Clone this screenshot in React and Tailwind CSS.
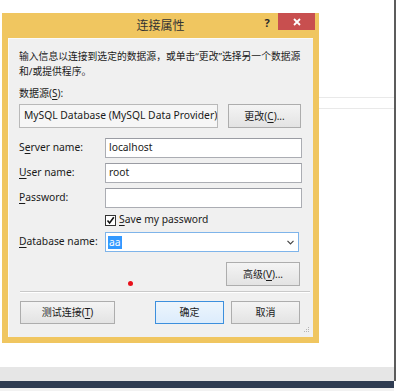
export default function App() {
  const btn =
    "h-full flex items-center justify-center border border-[#adadad] bg-gradient-to-b from-[#f4f4f4] to-[#e3e3e3] text-[10px] text-[#1a1a1a]";
  const box = "flex-1 h-full border border-[#abadb3] border-t-[#9a9ca3] bg-white flex items-center pl-[3px] text-[10.3px]";

  return (
    <div className="w-[398px] h-[391px] bg-white flex overflow-hidden font-['Noto_Sans','Noto_Sans_CJK_SC',sans-serif] text-[#1a1a1a]">
      <div className="w-[394px] flex flex-col">
        <div className="h-[367px] flex pt-[13px] pl-[2px]">
          {/* dialog */}
          <div className="w-[317px] h-[330px] bg-[#f0c660] flex flex-col shrink-0">
            <div className="h-[25px] flex shrink-0">
              <div className="w-[61px]" />
              <div className="flex-1 flex items-center justify-center text-[12px] text-[#333]">连接属性</div>
              <div className="w-[61px] flex items-start">
                <span className="w-[14px] mt-[4px] ml-[2px] text-center text-[11px] font-bold leading-[12px] text-[#2a2a2a]">?</span>
                <div className="ml-[4px] w-[37px] h-[17px] bg-[#c84f4f] flex items-center justify-center">
                  <svg width="8" height="8" viewBox="0 0 8 8">
                    <path d="M1 1 L7 7 M7 1 L1 7" stroke="#fff" strokeWidth="1.8" />
                  </svg>
                </div>
              </div>
            </div>

            {/* client area */}
            <div className="mx-[6px] mb-[6px] flex-1 bg-[#f0f0f0] border-t border-l border-[#fafafa] flex flex-col pt-[10px] pl-[10px] pr-[11px]">
              <p className="text-[9.8px] leading-[15px]">
                输入信息以连接到选定的数据源，或单击“更改”选择另一个数据源
                <br />
                和/或提供程序。
              </p>
              <div className="mt-[7px] text-[10px] leading-[14px]">
                数据源(<u className="underline-offset-2">S</u>):
              </div>
              <div className="mt-[4px] h-[24px] flex">
                <div className="w-[199px] h-full border border-[#b9b9b9] bg-[#f6f6f6] flex items-center pl-[4px] text-[10.3px] whitespace-nowrap overflow-hidden">
                  MySQL Database (MySQL Data Provider)
                </div>
                <div className={btn + " ml-[10px] w-[73px]"}>
                  更改(<u className="underline-offset-2">C</u>)...
                </div>
              </div>

              <div className="mt-[10px] h-[20px] flex items-center">
                <span className="w-[86px] text-[10.3px]">
                  S<u className="underline-offset-2">e</u>rver name:
                </span>
                <div className={box}>localhost</div>
              </div>
              <div className="mt-[5px] h-[20px] flex items-center">
                <span className="w-[86px] text-[10.3px]">
                  <u className="underline-offset-2">U</u>ser name:
                </span>
                <div className={box}>root</div>
              </div>
              <div className="mt-[5px] h-[20px] flex items-center">
                <span className="w-[86px] text-[10.3px]">
                  <u className="underline-offset-2">P</u>assword:
                </span>
                <div className={box} />
              </div>

              <div className="mt-[6px] h-[12px] flex items-center pl-[86px]">
                <div className="w-[11px] h-[11px] border border-[#333] bg-white flex items-center justify-center">
                  <svg width="9" height="9" viewBox="0 0 9 9">
                    <path d="M1.5 4.5 L3.6 7 L7.8 1.2" fill="none" stroke="#111" strokeWidth="1.6" />
                  </svg>
                </div>
                <span className="ml-[3px] text-[10.3px]">
                  <u className="underline-offset-2">S</u>ave my password
                </span>
              </div>

              <div className="mt-[6px] h-[20px] flex items-center">
                <span className="w-[86px] text-[10.3px]">
                  <u className="underline-offset-2">D</u>atabase name:
                </span>
                <div className="w-[194px] h-full border border-[#7eb4ea] bg-white flex items-center pl-[2px] pr-[4px]">
                  <span className="bg-[#3399ff] text-white text-[10.3px] leading-[13px] px-[1px]">aa</span>
                  <svg className="ml-auto" width="7" height="5" viewBox="0 0 7 5">
                    <path d="M0.5 0.8 L3.5 3.8 L6.5 0.8" fill="none" stroke="#444" strokeWidth="1.2" />
                  </svg>
                </div>
              </div>

              <div className="mt-[10px] h-[24px] flex items-end">
                <div className="ml-[109px] mb-[0px] w-[5px] h-[5px] rounded-full bg-[#e8101a]" />
                <div className={btn + " ml-auto mr-[2px] w-[74px]"}>
                  高级(<u className="underline-offset-2">V</u>)...
                </div>
              </div>

              <div className="mt-[5px] ml-[1px] -mr-[8px] border-t border-[#c9c9c9] border-b border-b-white" />

              <div className="mt-[8px] h-[23px] flex">
                <div className={btn + " ml-[1px] w-[95px]"}>
                  测试连接(<u className="underline-offset-2">T</u>)
                </div>
                <div className="ml-[40px] w-[69px] h-full flex items-center justify-center border border-[#3c8fdd] bg-gradient-to-b from-[#edf5fc] to-[#dcecfc] text-[10px]">
                  确定
                </div>
                <div className={btn + " ml-[7px] w-[69px]"}>取消</div>
              </div>

              <div className="mt-[3px] -mr-[8px] flex justify-end">
                <svg width="6" height="6" viewBox="0 0 6 6">
                  <rect x="4" y="0" width="1" height="1" fill="#b5b5b5" />
                  <rect x="2" y="2" width="1" height="1" fill="#b5b5b5" />
                  <rect x="4" y="2" width="1" height="1" fill="#b5b5b5" />
                  <rect x="0" y="4" width="1" height="1" fill="#b5b5b5" />
                  <rect x="2" y="4" width="1" height="1" fill="#b5b5b5" />
                  <rect x="4" y="4" width="1" height="1" fill="#b5b5b5" />
                </svg>
              </div>
            </div>
          </div>

          {/* background window behind */}
          <div className="flex-1 flex flex-col pt-[84px]">
            <div className="h-px bg-[#e9e9e9]" />
            <div className="h-[10px]" />
            <div className="h-px bg-[#e9e9e9]" />
          </div>
        </div>
        <div className="h-[14px] bg-[#e6e6e6]" />
        <div className="h-[7px] bg-[#2f3c52]" />
        <div className="flex-1 bg-[#f2f2f2]" />
      </div>
      <div className="w-[2px] h-[381px] bg-[#5c5c5c]" />
    </div>
  );
}
